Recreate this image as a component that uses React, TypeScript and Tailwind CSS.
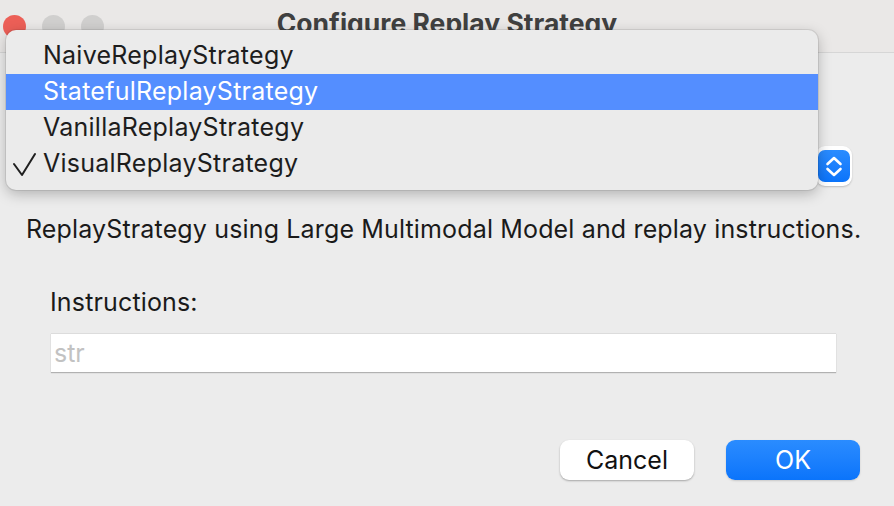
import React from "react";

const items = [
  { label: "NaiveReplayStrategy", selected: false, checked: false },
  { label: "StatefulReplayStrategy", selected: true, checked: false },
  { label: "VanillaReplayStrategy", selected: false, checked: false },
  { label: "VisualReplayStrategy", selected: false, checked: true },
];

function Check() {
  return (
    <svg width="24" height="26" viewBox="0 0 24 26" fill="none">
      <path d="M1 12 L9 23 L22 2" stroke="#1f1f1f" strokeWidth="2" strokeLinecap="round" strokeLinejoin="round" />
    </svg>
  );
}

function Stepper() {
  return (
    <div className="flex h-[32px] w-[32px] items-center justify-center rounded-[7px] bg-gradient-to-b from-[#2a8cff] to-[#0a74fb]">
      <svg width="32" height="32" viewBox="0 0 32 32" fill="none">
        <path d="M9.5 14 L16 8 L22.5 14" stroke="white" strokeWidth="2.6" strokeLinecap="round" strokeLinejoin="round" />
        <path d="M9.5 19 L16 25 L22.5 19" stroke="white" strokeWidth="2.6" strokeLinecap="round" strokeLinejoin="round" />
      </svg>
    </div>
  );
}

export default function App() {
  return (
    <div
      className="relative h-[506px] w-[894px] overflow-hidden bg-[#ececec] text-[#1d1d1d]"
      style={{ fontFamily: "Inter, 'Liberation Sans', sans-serif" }}
    >
      {/* title bar */}
      <div className="relative flex h-[53px] items-center border-b border-[#d6d6d6] bg-[#eae8e7] px-[3px]">
        <div className="flex gap-[16px]">
          <span className="h-[23px] w-[23px] rounded-full bg-[#ec5f57]" />
          <span className="h-[23px] w-[23px] rounded-full bg-[#d0cfce]" />
          <span className="h-[23px] w-[23px] rounded-full bg-[#d0cfce]" />
        </div>
        <div className="absolute inset-x-0 top-[5px] text-center text-[26.5px] font-bold leading-[36px] text-[#404040]">
          Configure Replay Strategy
        </div>
      </div>

      {/* body */}
      <div className="flex flex-col">
        <div className="mt-[93px] flex h-[40px] items-center justify-end pr-[42px]">
          <div className="flex h-[40px] items-center rounded-[9px] bg-white px-[2px] shadow-[0_1px_2px_rgba(0,0,0,0.2)]">
            <Stepper />
          </div>
        </div>

        <p className="mt-[28px] pl-[26px] text-[25px] leading-[30px] tracking-[0.15px] text-[#1a1a1a]">
          ReplayStrategy using Large Multimodal Model and replay instructions.
        </p>

        <p className="mt-[43px] pl-[50px] text-[25px] leading-[30px] tracking-[0.15px] text-[#1a1a1a]">
          Instructions:
        </p>

        <div className="ml-[51px] mt-[16px] flex h-[39px] w-[785px] items-center border-t border-[#dcdcdc] bg-white pl-[3px] shadow-[0_1px_1px_rgba(0,0,0,0.25)]">
          <span className="text-[25px] leading-[30px] text-[#c2c2c2]">str</span>
        </div>

        <div className="mt-[68px] flex justify-end gap-[32px] pr-[34px]">
          <button className="h-[40px] w-[134px] rounded-[9px] bg-white text-[25px] leading-[30px] text-[#111] shadow-[0_1px_2px_rgba(0,0,0,0.3)]">
            Cancel
          </button>
          <button className="h-[40px] w-[134px] rounded-[9px] bg-gradient-to-b from-[#2a8cff] to-[#0a74fb] text-[25px] leading-[30px] text-white shadow-[0_1px_2px_rgba(0,0,0,0.15)]">
            OK
          </button>
        </div>
      </div>

      {/* open popup menu */}
      <div className="absolute left-[6px] top-[30px] w-[812px] rounded-[10px] bg-[#ebebeb] py-[8px] shadow-[0_4px_14px_rgba(0,0,0,0.25),0_0_0_1px_rgba(0,0,0,0.08)]">
        {items.map((item) => (
          <div
            key={item.label}
            className={
              item.selected
                ? "relative flex h-[36px] items-center bg-[#548eff] pl-[37px] text-[25px] tracking-[0.25px] text-white"
                : "relative flex h-[36px] items-center pl-[37px] text-[25px] tracking-[0.25px] text-[#1d1d1d]"
            }
          >
            {item.checked ? (
              <span className="absolute left-[7px] top-[6px]">
                <Check />
              </span>
            ) : null}
            {item.label}
          </div>
        ))}
      </div>
    </div>
  );
}
